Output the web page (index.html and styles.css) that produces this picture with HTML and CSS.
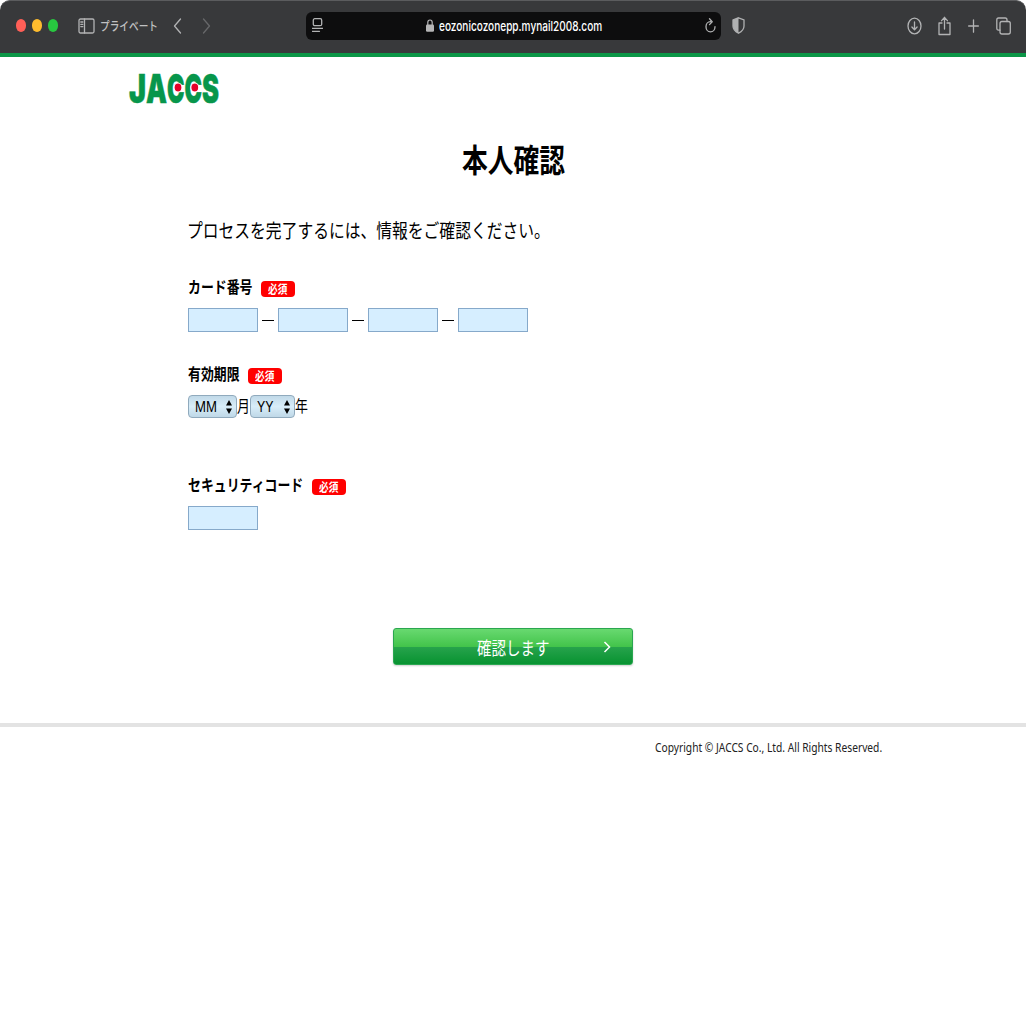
FILE: index.html
```html
<!DOCTYPE html>
<html lang="ja">
<head>
<meta charset="utf-8">
<title>本人確認</title>
<link rel="stylesheet" href="styles.css">
</head>
<body>
<header class="toolbar">
  <div class="lights"><i class="red"></i><i class="yellow"></i><i class="green"></i></div>
  <svg class="icon sidebar" width="17" height="16" viewBox="0 0 17 16"><rect x="1" y="1" width="15" height="14" rx="1.5"/><path d="M6.500 1v14M2.800 4h2M2.800 6.300h2M2.800 8.600h2"/></svg>
  <div class="private"><span class="squeeze">プライベート</span></div>
  <svg class="icon back" width="9" height="16" viewBox="0 0 9 16"><path d="M7.500 1L1.500 8l6 7"/></svg>
  <svg class="icon forward" width="9" height="16" viewBox="0 0 9 16"><path d="M1.500 1l6 7-6 7"/></svg>
  <div class="address">
    <svg class="icon reader" width="11" height="15" viewBox="0 0 11 15"><rect x="1.300" y=".7" width="8.400" height="7" rx="1.500"/><path d="M.5 10.300h10M.5 13.300h7"/></svg>
    <svg class="lock" width="8" height="13" viewBox="0 0 8 13"><path d="M1.800 6V3.600a2.200 2.600 0 0 1 4.400 0V6" fill="none" stroke="#b5b5b6" stroke-width="1.200"/><rect x="0" y="5.600" width="8" height="7.200" rx="1.200" fill="#b5b5b6"/></svg>
    <div class="url"><span class="squeeze">eozonicozonepp.mynail2008.com</span></div>
    <svg class="icon reload" width="11" height="15" viewBox="0 0 11 15"><path d="M5.500 3.700C2.800 3.700 1 5.700 1 8.700s1.900 5.200 4.500 5.200S10 11.600 10 8.700M4.500.8l2.700 2.900-2.700 2.900"/></svg>
  </div>
  <svg class="shield" width="13" height="17" viewBox="0 0 13 17"><path d="M6.500.8L12 3v6c0 3.400-2.400 5.600-5.500 7.200C3.400 14.600 1 12.400 1 9V3z" fill="none" stroke="#b0b1b2" stroke-width="1.300"/><path d="M6.500.8v15.400C3.400 14.600 1 12.400 1 9V3z" fill="#b0b1b2"/></svg>
  <div class="actions">
    <svg class="icon" width="15" height="18" viewBox="0 0 15 18"><ellipse cx="7.500" cy="9" rx="6.500" ry="7.800"/><path d="M7.500 5v7.500M4.900 10l2.600 2.800 2.600-2.800"/></svg>
    <svg class="icon" width="13" height="20" viewBox="0 0 13 20"><path d="M4 7H1v11.500h11V7H9M6.500 13V1.500M3.600 4.700l2.900-3.400 2.900 3.400"/></svg>
    <svg class="icon" width="11" height="14" viewBox="0 0 11 14"><path d="M5.500.8v12.400M.6 7h9.800"/></svg>
    <svg class="icon" width="15" height="18" viewBox="0 0 15 18"><rect x="4" y="4.500" width="10.300" height="12.500" rx="2"/><path d="M4 13.200H2.500Q.8 13.200.8 11.200V3Q.8 1 2.500 1h6.700Q11 1 11 3v1.500"/></svg>
  </div>
</header>
<main class="page">
  <svg class="logo" width="92" height="36" viewBox="0 0 92 36">
    <g class="wordmark">
      <text x="1" y="32.500" textLength="17" lengthAdjust="spacingAndGlyphs">J</text>
      <text x="18" y="32.500" textLength="21" lengthAdjust="spacingAndGlyphs">A</text>
      <text x="39" y="32.500" textLength="17.500" lengthAdjust="spacingAndGlyphs">C</text>
      <text x="56.500" y="32.500" textLength="17.500" lengthAdjust="spacingAndGlyphs">C</text>
      <text x="74" y="32.500" textLength="17" lengthAdjust="spacingAndGlyphs">S</text>
    </g>
    <g fill="#e60028" stroke="#fff" stroke-width="1.200"><ellipse cx="50" cy="17.500" rx="4" ry="4.500"/><ellipse cx="66.800" cy="17.500" rx="4" ry="4.500"/></g>
  </svg>
  <h1 class="title"><span class="squeeze">本人確認</span></h1>
  <section class="details">
    <p class="lead"><span class="squeeze">プロセスを完了するには、情報をご確認ください。</span></p>
    <div class="label"><b class="name"><span class="squeeze">カード番号</span></b><span class="badge"><span class="squeeze">必須</span></span></div>
    <div class="boxes"><span class="box"></span><i class="dash"></i><span class="box"></span><i class="dash"></i><span class="box"></span><i class="dash"></i><span class="box"></span></div>
    <div class="label expiry"><b class="name four"><span class="squeeze">有効期限</span></b><span class="badge"><span class="squeeze">必須</span></span></div>
    <div class="dates">
      <div class="picker month"><span class="squeeze">MM</span><svg width="6" height="14" viewBox="0 0 6 14"><path d="M3 0L6 5.500H0zM0 8.500h6L3 14z"/></svg></div>
      <div class="unit"><span class="squeeze">月</span></div>
      <div class="picker year"><span class="squeeze">YY</span><svg width="6" height="14" viewBox="0 0 6 14"><path d="M3 0L6 5.500H0zM0 8.500h6L3 14z"/></svg></div>
      <div class="unit"><span class="squeeze">年</span></div>
    </div>
    <div class="label security"><b class="name nine"><span class="squeeze">セキュリティコード</span></b><span class="badge"><span class="squeeze">必須</span></span></div>
    <div class="boxes"><span class="box"></span></div>
  </section>
  <div class="button"><span class="squeeze">確認します</span><svg width="8" height="12" viewBox="0 0 8 12"><path d="M1.500 1l5 5-5 5" fill="none" stroke="#fff" stroke-width="1.500"/></svg></div>
</main>
<footer class="footer"><div class="copyright"><span class="squeeze">Copyright © JACCS Co., Ltd. All Rights Reserved.</span></div></footer>
</body>
</html>
```
FILE: styles.css
```css
* { box-sizing: border-box; }
body { margin: 0; background: #fff; color: #000; font-family: "Liberation Sans", "Noto Sans CJK JP", sans-serif; }
svg { display: block; flex: none; }
.squeeze { display: inline-block; white-space: nowrap; transform: scaleX(.805); transform-origin: left center; }
.toolbar { display: flex; align-items: center; height: 57px; padding: 0 15px 3px 15.5px; background: #38393b; border-top: 1px solid #5b5c5e; border-bottom: 4px solid #0b9647; border-radius: 10px 10px 0 0; }
.lights { display: flex; gap: 5.500px; width: 62.500px; }
.lights i { width: 10.500px; height: 12.500px; border-radius: 50%; }
.red { background: #ff5f57; }
.yellow { background: #febc2e; }
.green { background: #28c840; }
.icon { fill: none; stroke: #b2b3b4; stroke-width: 1.3; stroke-linecap: round; stroke-linejoin: round; }
.private { width: 58px; margin: 0 15px 0 5px; color: #c0c1c2; font: 500 12px/18px "Noto Sans CJK JP", sans-serif; }
.forward { margin-left: 20px; stroke: #67686a; }
.address { display: flex; align-items: center; width: 415px; height: 28px; margin-left: 95px; padding: 0 5px 0 6px; border-radius: 6px; background: #0d0d0e; }
.lock { margin-left: 103px; }
.url { width: 163px; margin-left: 4.500px; color: #fff; font: 500 13.5px/18px Inter, sans-serif; }
.url .squeeze { transform: scaleX(.745); }
.reload { margin-left: auto; }
.shield { margin-left: 11px; }
.actions { display: flex; align-items: center; gap: 17px; margin: 0 0 0 auto; }
.actions svg:nth-child(2) { margin-left: -1px; }
.page { height: 666px; padding-top: 13px; }
.logo { margin-left: 128px; overflow: visible; }
.wordmark { fill: #07964b; stroke: #07964b; stroke-width: .5; font: 900 40px Inter, sans-serif; }
.title { width: 103px; height: 48px; margin: 28px 0 0 461.500px; font: 700 32px/48px "Noto Sans CJK JP", sans-serif; }
.details { padding-left: 188px; }
.lead { height: 30px; margin: 33px 0 0 -1px; font: 400 19.6px/30px "Noto Sans CJK JP", sans-serif; }
.label { display: flex; align-items: flex-start; height: 24px; margin-top: 29px; }
.name { width: 73px; font: 700 16px/24px "Noto Sans CJK JP", sans-serif; }
.four { width: 60px; }
.nine { width: 124px; }
.badge { width: 34px; height: 16px; margin-top: 7px; padding-left: 7px; border-radius: 4px; background: #f00; color: #fff; font: 700 12px/16px "Noto Sans CJK JP", sans-serif; }
.boxes { display: flex; align-items: center; margin-top: 10px; }
.box { width: 69.500px; height: 24px; border: 1px solid #86a9ca; background: #d6eeff; }
.dash { width: 12px; height: 1px; margin: 0 4.300px; background: #000; }
.expiry { margin-top: 29px; }
.dates { display: flex; margin-top: 10px; height: 24px; }
.picker { display: flex; align-items: center; justify-content: space-between; height: 23px; padding: 0 4px 0 6px; border: 1px solid #90aabd; border-radius: 4px; background: linear-gradient(#c1d9e8, #d8edf9 50%, #bfd8e7); font: 400 15px/22px Inter, "Liberation Sans", sans-serif; }
.month { width: 49px; }
.year { width: 45px; }
.picker .squeeze { width: 22px; transform: scaleX(.81); }
.unit { width: 13px; font: 400 16px/21px "Noto Sans CJK JP", sans-serif; }
.security { margin-top: 53px; }
.button { display: flex; align-items: center; justify-content: space-between; width: 240px; height: 37px; margin: 98px 0 0 392.500px; padding: 0 21px 0 83px; border: 1px solid #2aa650; border-radius: 3px; box-shadow: 0 1px 2px #d0d0d0; background: linear-gradient(#68d970, #43c44b 50%, #27a34c 51%, #089331); color: #fff; font: 400 18px/34px "Noto Sans CJK JP", sans-serif; }
.footer { padding: 12px 0 0 655px; border-top: 4px solid #e3e3e3; }
.copyright { width: 227px; color: #222; font: 400 12px/18px "Noto Sans", sans-serif; }
.copyright .squeeze { transform: scaleX(.853); }
```
